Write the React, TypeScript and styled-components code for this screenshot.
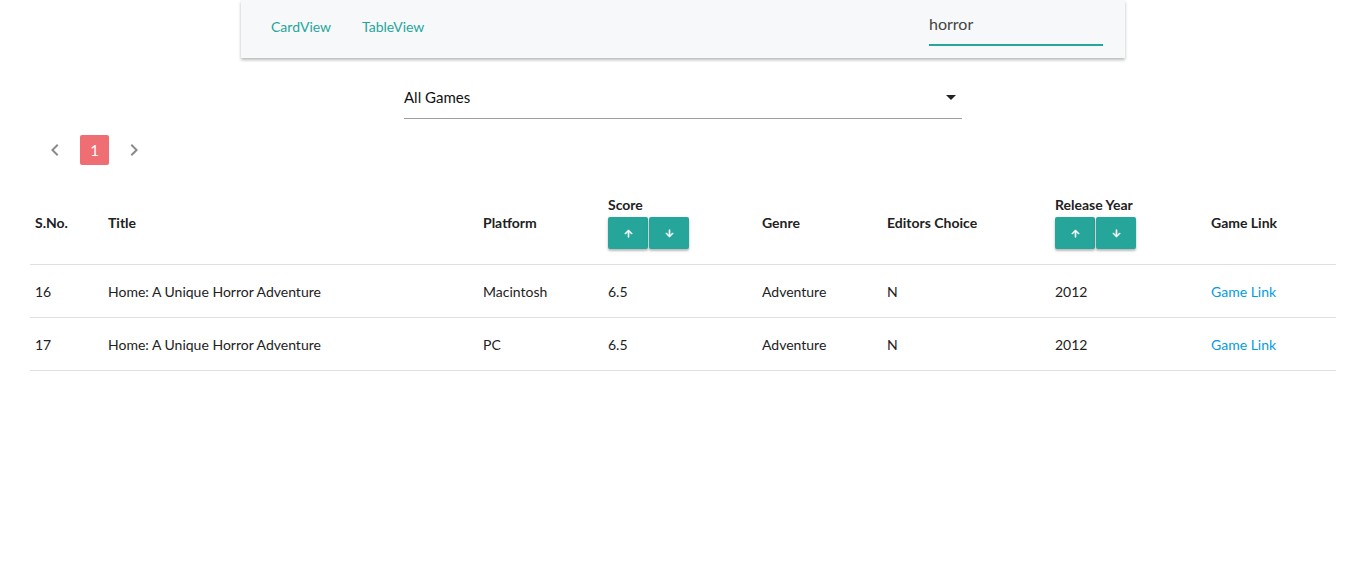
import React, { useState } from 'react';
import styled, { createGlobalStyle } from 'styled-components';

type Game = {
  id: number;
  title: string;
  platform: string;
  score: number;
  genre: string;
  editorsChoice: string;
  year: number;
};

const games: Game[] = [
  { id: 16, title: 'Home: A Unique Horror Adventure', platform: 'Macintosh', score: 6.5, genre: 'Adventure', editorsChoice: 'N', year: 2012 },
  { id: 17, title: 'Home: A Unique Horror Adventure', platform: 'PC', score: 6.5, genre: 'Adventure', editorsChoice: 'N', year: 2012 },
];

const columns = [73, 375, 125, 154, 125, 168, 156, 130];

const ArrowUp = () => (
  <svg width="11" height="11" viewBox="0 0 24 24" fill="white">
    <path d="M4 12l1.41 1.41L11 7.83V20h2V7.83l5.58 5.59L20 12l-8-8-8 8z" stroke="white" strokeWidth="1.5" />
  </svg>
);

const ArrowDown = () => (
  <svg width="11" height="11" viewBox="0 0 24 24" fill="white">
    <path d="M20 12l-1.41-1.41L13 16.17V4h-2v12.17l-5.58-5.59L4 12l8 8 8-8z" stroke="white" strokeWidth="1.5" />
  </svg>
);

const Chevron = ({ dir }: { dir: 'left' | 'right' }) => (
  <svg width="24" height="24" viewBox="0 0 24 24" fill="#8a8a8a">
    {dir === 'left' ? (
      <path d="M15.41 7.41L14 6l-6 6 6 6 1.41-1.41L10.83 12z" />
    ) : (
      <path d="M10 6L8.59 7.41 13.17 12l-4.58 4.59L10 18l6-6z" />
    )}
  </svg>
);

const SortButtons = () => (
  <SortGroup>
    <SortButton><ArrowUp /></SortButton>
    <SortButton><ArrowDown /></SortButton>
  </SortGroup>
);

export default function App() {
  const [search, setSearch] = useState('horror');

  return (
    <>
      <GlobalStyle />
      <Page>
        <Nav>
          <NavLinks>
            <NavLink href="#">CardView</NavLink>
            <NavLink href="#">TableView</NavLink>
          </NavLinks>
          <SearchInput value={search} onChange={(e) => setSearch(e.target.value)} />
        </Nav>

        <SelectBox>
          <span>All Games</span>
          <Caret />
        </SelectBox>

        <Pagination>
          <PageArrow><Chevron dir="left" /></PageArrow>
          <PageNumber>1</PageNumber>
          <PageArrow><Chevron dir="right" /></PageArrow>
        </Pagination>

        <Table>
          <colgroup>
            {columns.map((w, i) => (
              <col key={i} style={{ width: w }} />
            ))}
          </colgroup>
          <thead>
            <tr>
              <Th>S.No.</Th>
              <Th>Title</Th>
              <Th>Platform</Th>
              <Th>
                <HeadLabel>Score</HeadLabel>
                <SortButtons />
              </Th>
              <Th>Genre</Th>
              <Th>Editors Choice</Th>
              <Th>
                <HeadLabel>Release Year</HeadLabel>
                <SortButtons />
              </Th>
              <Th>Game Link</Th>
            </tr>
          </thead>
          <tbody>
            {games.map((g) => (
              <tr key={g.id}>
                <Td>{g.id}</Td>
                <Td>{g.title}</Td>
                <Td>{g.platform}</Td>
                <Td>{g.score}</Td>
                <Td>{g.genre}</Td>
                <Td>{g.editorsChoice}</Td>
                <Td>{g.year}</Td>
                <Td><GameLink href="#">Game Link</GameLink></Td>
              </tr>
            ))}
          </tbody>
        </Table>
      </Page>
    </>
  );
}

const GlobalStyle = createGlobalStyle`
  body {
    margin: 0;
    background: #fff;
    font-family: Lato, "Noto Sans", sans-serif;
    color: #222;
  }
`;

const Page = styled.div`
  display: flex;
  flex-direction: column;
  align-items: center;
  padding: 0 30px;
`;

const Nav = styled.nav`
  width: 884px;
  height: 58px;
  box-sizing: border-box;
  background: #f7f8fa;
  box-shadow: 0 2px 3px rgba(0, 0, 0, 0.28);
  display: flex;
  align-items: center;
  justify-content: space-between;
  padding: 0 22px 0 30px;
`;

const NavLinks = styled.div`
  display: flex;
  gap: 31px;
  margin-top: -5px;
`;

const NavLink = styled.a`
  color: #26a69a;
  text-decoration: none;
  font-size: 14px;
`;

const SearchInput = styled.input`
  align-self: flex-start;
  width: 174px;
  height: 46px;
  box-sizing: border-box;
  border: none;
  border-bottom: 2px solid #26a69a;
  background: transparent;
  outline: none;
  padding: 2px 0 0;
  font-family: Lato, "Noto Sans", sans-serif;
  font-size: 16px;
  color: #444;
`;

const SelectBox = styled.div`
  width: 558px;
  height: 43px;
  box-sizing: border-box;
  margin-top: 18px;
  border-bottom: 1px solid #9e9e9e;
  display: flex;
  align-items: center;
  justify-content: space-between;
  padding: 0 6px 0 0;
  font-size: 15px;
  color: #111;
`;

const Caret = styled.span`
  width: 0;
  height: 0;
  border-left: 5px solid transparent;
  border-right: 5px solid transparent;
  border-top: 5px solid #222;
`;

const Pagination = styled.div`
  align-self: stretch;
  display: flex;
  align-items: center;
  gap: 13px;
  margin-top: 16px;
  padding-left: 13px;
`;

const PageArrow = styled.span`
  display: flex;
`;

const PageNumber = styled.span`
  width: 29px;
  height: 30px;
  border-radius: 2px;
  background: #ee6e73;
  color: #fff;
  display: flex;
  align-items: center;
  justify-content: center;
  font-size: 15px;
`;

const Table = styled.table`
  width: 100%;
  table-layout: fixed;
  border-collapse: collapse;
  margin-top: 15px;
  font-size: 14px;
`;

const Th = styled.th`
  text-align: left;
  font-weight: 700;
  padding: 15px 5px;
  vertical-align: middle;
  color: #222;
  border-bottom: 1px solid #e0e0e0;
`;

const HeadLabel = styled.div`
  line-height: 20px;
`;

const SortGroup = styled.div`
  display: flex;
  gap: 1px;
  margin-top: 2px;
`;

const SortButton = styled.button`
  width: 40px;
  height: 32px;
  border: none;
  border-radius: 2px;
  background: #26a69a;
  box-shadow: 0 2px 2px rgba(0, 0, 0, 0.2), 0 1px 4px rgba(0, 0, 0, 0.12);
  display: flex;
  align-items: center;
  justify-content: center;
  padding: 0;
`;

const Td = styled.td`
  padding: 15px 5px;
  height: 53px;
  box-sizing: border-box;
  color: #222;
  border-bottom: 1px solid #e0e0e0;
`;

const GameLink = styled.a`
  color: #039be5;
  text-decoration: none;
`;
